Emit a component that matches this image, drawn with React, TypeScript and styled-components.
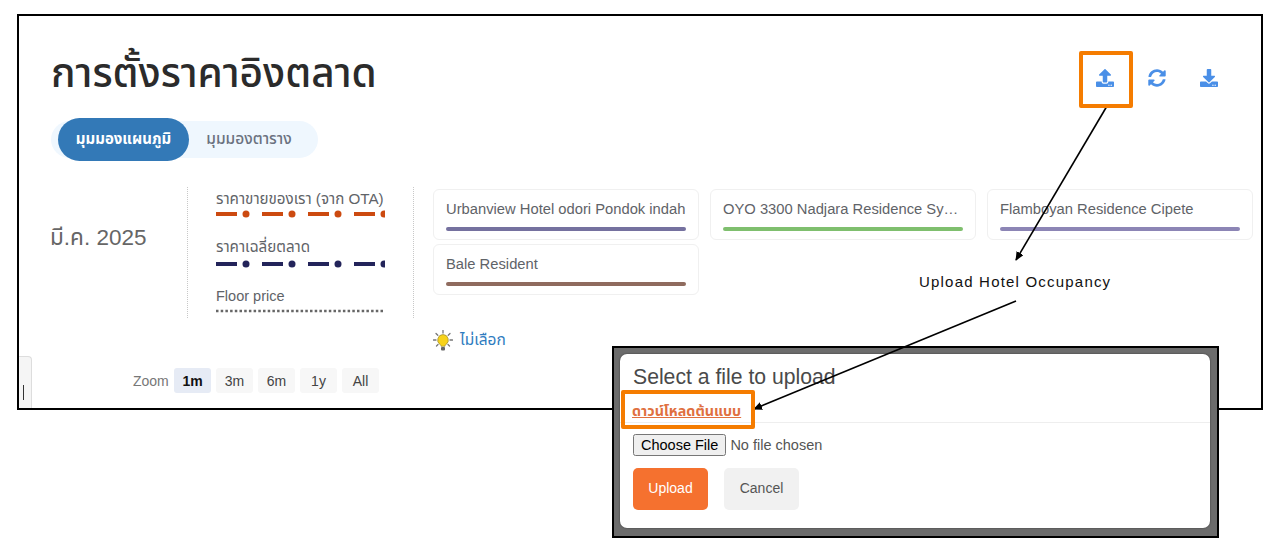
import React from 'react';
import styled, { createGlobalStyle } from 'styled-components';
import { FaDownload, FaSyncAlt, FaUpload } from 'react-icons/fa';

const GlobalStyle = createGlobalStyle`
  html, body {
    margin: 0;
    padding: 0;
    background: #ffffff;
  }
  body {
    font-family: "Liberation Sans", "Noto Sans", "Noto Sans Thai", "Noto Sans CJK SC", sans-serif;
  }
`;

const Page = styled.div`
  position: relative;
  width: 1279px;
  height: 554px;
  overflow: hidden;
  background: #ffffff;
`;

const Frame = styled.div`
  position: relative;
  box-sizing: border-box;
  width: 1246px;
  height: 396px;
  margin: 14px 0 0 17px;
  border: 2px solid #000000;
  padding: 37px 0 0 32px;
  overflow: hidden;
`;

const Header = styled.div`
  display: flex;
  align-items: center;
  justify-content: space-between;
  height: 40px;
  padding-right: 43px;
`;

const Title = styled.h1`
  margin: 0;
  font-size: 40.5px;
  font-weight: 500;
  line-height: 40px;
  color: #2b2b2b;
`;

const Actions = styled.div`
  display: flex;
  gap: 34px;
  margin-top: 10px;
`;

const ActionIcon = styled.span`
  display: flex;
  color: #4a8fe7;
  font-size: 18px;
`;

const Tabs = styled.div`
  display: flex;
  align-items: center;
  width: 267px;
  height: 37px;
  margin-top: 28px;
  padding-left: 7px;
  box-sizing: border-box;
  border-radius: 19px;
  background: #eff7fe;
`;

const Tab = styled.div<{ $active?: boolean }>`
  display: flex;
  align-items: center;
  justify-content: center;
  height: 43px;
  width: ${p => (p.$active ? '131px' : '120px')};
  border-radius: 22px;
  font-size: ${p => (p.$active ? '15px' : '15.5px')};
  font-weight: ${p => (p.$active ? 700 : 500)};
  color: ${p => (p.$active ? '#ffffff' : '#6b7280')};
  background: ${p => (p.$active ? '#3379b7' : 'transparent')};
`;

const ChartHead = styled.div`
  display: flex;
  align-items: flex-start;
  margin-top: 29px;
`;

const Month = styled.div`
  width: 137px;
  height: 131px;
  display: flex;
  align-items: center;
  font-size: 22.5px;
  color: #666666;
  margin-left: -1px;
  padding-bottom: 29px;
  box-sizing: border-box;
`;

const Legend = styled.div`
  box-sizing: border-box;
  width: 227px;
  height: 131px;
  padding: 3px 0 0 28px;
  border-left: 1px dotted #c8c8c8;
  border-right: 1px dotted #c8c8c8;
`;

const LegendItem = styled.div`
  display: flex;
  flex-direction: column;
  height: 49.5px;
`;

const LegendLabel = styled.div<{ $size: number; $margin?: string }>`
  font-size: ${p => p.$size}px;
  line-height: 17px;
  margin: ${p => p.$margin || '0'};
  color: #5f6368;
  white-space: nowrap;
`;

const LegendLine = styled.svg`
  display: block;
  flex: none;
  width: 169px;
  height: 8px;
  margin-top: 3px;
`;

const RightColumn = styled.div`
  margin-left: 19px;
  padding-top: 2px;
`;

const Cards = styled.div`
  display: grid;
  grid-template-columns: repeat(3, 266px);
  column-gap: 11px;
  row-gap: 4px;
`;

const Card = styled.div`
  box-sizing: border-box;
  height: 51px;
  padding: 11px 12px 0 12px;
  border: 1px solid #f0f0f0;
  border-radius: 6px;
`;

const CardName = styled.div`
  font-size: 14.75px;
  line-height: 17px;
  color: #5f6368;
  white-space: nowrap;
  overflow: hidden;
  text-overflow: ellipsis;
`;

const CardBar = styled.div<{ $color: string }>`
  height: 4px;
  margin-top: 9px;
  border-radius: 2px;
  background: ${p => p.$color};
`;

const Hint = styled.div`
  display: flex;
  align-items: center;
  gap: 7px;
  margin-top: 34px;
  font-size: 15.5px;
  color: #2f7cc0;
`;

const ZoomRow = styled.div`
  display: flex;
  align-items: center;
  gap: 5px;
  margin-top: 16px;
  padding-left: 82px;
`;

const ZoomLabel = styled.span`
  width: 36px;
  font-size: 14px;
  color: #777777;
`;

const ZoomButton = styled.div<{ $active?: boolean }>`
  display: flex;
  align-items: center;
  justify-content: center;
  width: 37px;
  height: 25px;
  border-radius: 3px;
  font-size: 14px;
  font-weight: ${p => (p.$active ? 700 : 400)};
  color: ${p => (p.$active ? '#111111' : '#444444')};
  background: ${p => (p.$active ? '#e6ebf5' : '#f7f7f7')};
`;

const SideHandle = styled.div`
  position: absolute;
  left: 0;
  bottom: 0;
  width: 12px;
  height: 51px;
  border: 1px solid #dddddd;
  border-left: none;
  border-bottom: none;
  border-top-right-radius: 4px;
  background: #f5f5f5;
  &::after {
    content: '';
    position: absolute;
    left: 4px;
    top: 28px;
    width: 1px;
    height: 15px;
    background: #333333;
  }
`;

const Annotations = styled.svg`
  position: absolute;
  left: 0;
  top: 0;
  width: 1279px;
  height: 554px;
  z-index: 3;
  pointer-events: none;
`;

const Highlight = styled.div<{ $left: number; $top: number; $width: number; $height: number }>`
  position: absolute;
  left: ${p => p.$left}px;
  top: ${p => p.$top}px;
  width: ${p => p.$width}px;
  height: ${p => p.$height}px;
  box-sizing: border-box;
  border: 4px solid #f57c00;
  border-radius: 2px;
  z-index: 4;
`;

const Callout = styled.div`
  position: absolute;
  left: 919px;
  top: 273px;
  font-size: 15px;
  line-height: 18px;
  letter-spacing: 1.2px;
  color: #111111;
  white-space: nowrap;
  z-index: 3;
`;

const Backdrop = styled.div`
  position: absolute;
  left: 612px;
  top: 346px;
  width: 607px;
  height: 192px;
  box-sizing: border-box;
  padding: 6px 7px 8px 6px;
  border: 2px solid #000000;
  background: #6c6c6c;
  z-index: 2;
`;

const Dialog = styled.div`
  box-sizing: border-box;
  height: 174px;
  border-radius: 7px;
  background: #ffffff;
  padding: 11px 0 0 13px;
  box-shadow: 0 0 2px rgba(0, 0, 0, 0.5);
`;

const DialogTitle = styled.div`
  font-size: 21.2px;
  line-height: 24px;
  color: #4a4a4a;
`;

const TemplateLink = styled.a`
  display: block;
  margin: 14px 0 0 -1px;
  font-size: 14.3px;
  font-weight: 700;
  line-height: 16px;
  color: #e0703f;
  text-decoration: underline;
`;

const Divider = styled.div`
  height: 1px;
  margin: 3px 0 0 -13px;
  background: #eeeeee;
`;

const FileInput = styled.input`
  display: block;
  margin: 11px 0 0;
  font-family: "Liberation Sans", sans-serif;
  font-size: 14.5px;
  color: #555555;
`;

const ButtonRow = styled.div`
  display: flex;
  gap: 16px;
  margin-top: 12px;
`;

const DialogButton = styled.div<{ $primary?: boolean }>`
  display: flex;
  align-items: center;
  justify-content: center;
  box-sizing: border-box;
  width: 75px;
  height: 42px;
  padding-bottom: 2px;
  border-radius: 5px;
  font-size: 14px;
  color: ${p => (p.$primary ? '#ffffff' : '#555555')};
  background: ${p => (p.$primary ? '#f5712f' : '#f1f1f1')};
`;

const hotels = [
  { name: 'Urbanview Hotel odori Pondok indah', color: '#75719f' },
  { name: 'OYO 3300 Nadjara Residence Syariah Cipete', color: '#7fbf6e' },
  { name: 'Flamboyan Residence Cipete', color: '#8c85b5' },
  { name: 'Bale Resident', color: '#8f6b5e' },
];

const zoomOptions = ['1m', '3m', '6m', '1y', 'All'];

const DashDot: React.FC<{ color: string }> = ({ color }) => (
  <LegendLine viewBox="0 0 169 8">
    <line x1="0" y1="4" x2="169" y2="4" stroke={color} strokeWidth="4" strokeDasharray="21 25" />
    {[30, 76, 122, 168].map(cx => (
      <circle key={cx} cx={cx} cy="4" r="3.5" fill={color} />
    ))}
  </LegendLine>
);

const Bulb: React.FC = () => (
  <svg width="20" height="22" viewBox="0 0 20 22">
    <g stroke="#777777" strokeWidth="1.3" strokeLinecap="round">
      <line x1="10" y1="0.5" x2="10" y2="3" />
      <line x1="3" y1="3.5" x2="4.8" y2="5.3" />
      <line x1="17" y1="3.5" x2="15.2" y2="5.3" />
      <line x1="0.5" y1="10" x2="3" y2="10" />
      <line x1="19.5" y1="10" x2="17" y2="10" />
      <line x1="3.5" y1="16" x2="5" y2="14.5" />
      <line x1="16.5" y1="16" x2="15" y2="14.5" />
    </g>
    <path d="M10 4.5a5.5 5.5 0 0 0-3 10c.8.6 1 1.2 1 1.8h4c0-.6.2-1.2 1-1.8a5.5 5.5 0 0 0-3-10z" fill="#f7d21a" stroke="#8a7a30" strokeWidth="0.6" />
    <rect x="8" y="17" width="4" height="3.5" rx="1" fill="#666666" />
  </svg>
);

const App: React.FC = () => (
  <Page>
    <GlobalStyle />
    <Frame>
      <Header>
        <Title>การตั้งราคาอิงตลาด</Title>
        <Actions>
          <ActionIcon><FaUpload /></ActionIcon>
          <ActionIcon><FaSyncAlt /></ActionIcon>
          <ActionIcon><FaDownload /></ActionIcon>
        </Actions>
      </Header>
      <Tabs>
        <Tab $active>มุมมองแผนภูมิ</Tab>
        <Tab>มุมมองตาราง</Tab>
      </Tabs>
      <ChartHead>
        <Month>มี.ค. 2025</Month>
        <Legend>
          <LegendItem>
            <LegendLabel $size={15.2}>ราคาขายของเรา (จาก OTA)</LegendLabel>
            <DashDot color="#cc4a10" />
          </LegendItem>
          <LegendItem>
            <LegendLabel $size={15.2} $margin="-2px 0 2px">ราคาเฉลี่ยตลาด</LegendLabel>
            <DashDot color="#23245a" />
          </LegendItem>
          <LegendItem>
            <LegendLabel $size={14.5} $margin="-1px 0 -1px">Floor price</LegendLabel>
            <LegendLine viewBox="0 0 169 8">
              <line x1="0" y1="4" x2="169" y2="4" stroke="#666666" strokeWidth="2.5" strokeDasharray="2.5 2.2" />
            </LegendLine>
          </LegendItem>
        </Legend>
        <RightColumn>
          <Cards>
            {hotels.map(hotel => (
              <Card key={hotel.name}>
                <CardName>{hotel.name}</CardName>
                <CardBar $color={hotel.color} />
              </Card>
            ))}
          </Cards>
          <Hint>
            <Bulb />
            ไม่เลือก
          </Hint>
        </RightColumn>
      </ChartHead>
      <ZoomRow>
        <ZoomLabel>Zoom</ZoomLabel>
        {zoomOptions.map((option, index) => (
          <ZoomButton key={option} $active={index === 0}>{option}</ZoomButton>
        ))}
      </ZoomRow>
      <SideHandle />
    </Frame>

    <Backdrop>
      <Dialog>
        <DialogTitle>Select a file to upload</DialogTitle>
        <TemplateLink>ดาวน์โหลดต้นแบบ</TemplateLink>
        <Divider />
        <FileInput type="file" />
        <ButtonRow>
          <DialogButton $primary>Upload</DialogButton>
          <DialogButton>Cancel</DialogButton>
        </ButtonRow>
      </Dialog>
    </Backdrop>

    <Highlight $left={1079} $top={51} $width={54} $height={57} />
    <Highlight $left={621} $top={390} $width={134} $height={39} />
    <Callout>Upload Hotel Occupancy</Callout>
    <Annotations viewBox="0 0 1279 554">
      <defs>
        <marker id="head" markerWidth="10" markerHeight="10" refX="8" refY="4" orient="auto" markerUnits="userSpaceOnUse">
          <path d="M0 0L9 4L0 8z" fill="#000000" />
        </marker>
      </defs>
      <line x1="1107" y1="106" x2="1016" y2="260" stroke="#000000" strokeWidth="1.6" markerEnd="url(#head)" />
      <line x1="1016" y1="301" x2="754" y2="409" stroke="#000000" strokeWidth="1.6" markerEnd="url(#head)" />
    </Annotations>
  </Page>
);

export default App;
